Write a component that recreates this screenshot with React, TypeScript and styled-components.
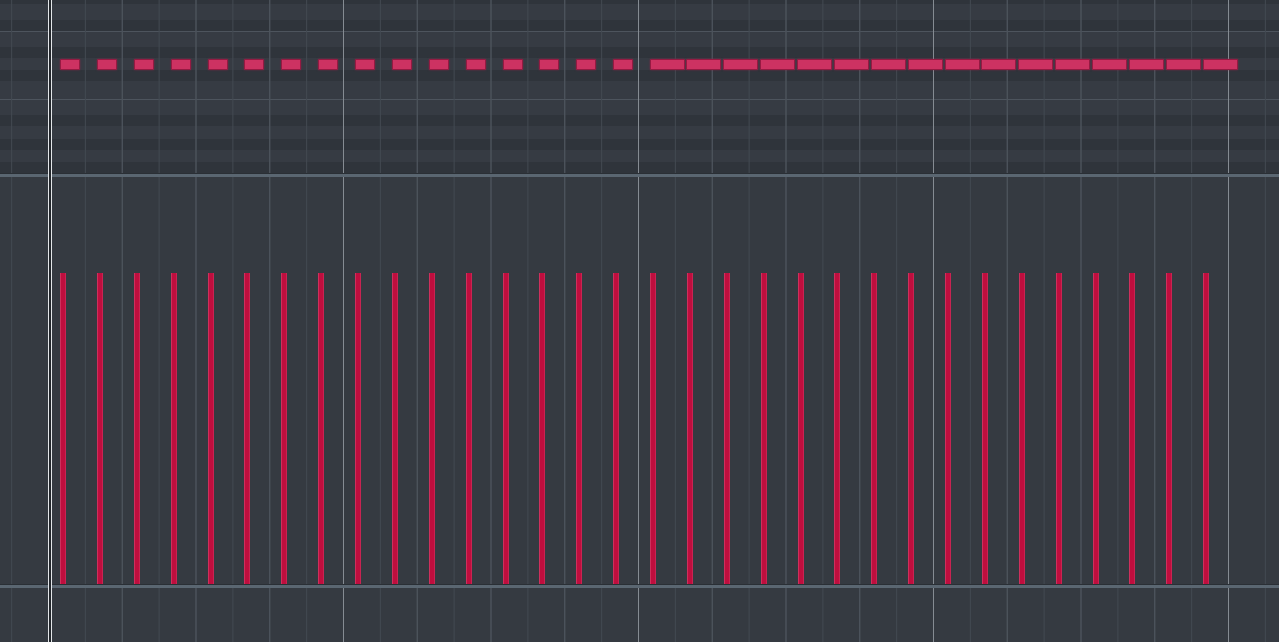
import React from "react";
import styled, { createGlobalStyle } from "styled-components";

// one beat on screen; a bar of 8 beats spans 295px
const BEAT = 295 / 8;
const ORIGIN = 48;
const FIRST_NOTE = 60;

const GlobalStyle = createGlobalStyle`
  html, body {
    margin: 0;
    padding: 0;
    background: #343940;
    overflow: hidden;
  }
  body {
    font-family: "Liberation Sans", Arial, sans-serif;
  }
`;

const gridImage = `
  linear-gradient(90deg, #858b92 0 1px, transparent 1px),
  linear-gradient(90deg, #4f565f 0 1px, transparent 1px),
  linear-gradient(90deg, #424951 0 1px, transparent 1px)
`;
const gridSize = `295px 100%, ${BEAT * 2}px 100%, ${BEAT}px 100%`;
const gridPos = `${ORIGIN}px 0, ${ORIGIN}px 0, ${ORIGIN}px 0`;

// darker rows for the black keys in the visible octave slice
const blackKeys: [number, number][] = [
  [0, 4],
  [20, 31],
  [47, 58],
  [70, 81],
  [115, 126],
  [139, 150],
  [162, 173],
];

const keyStripes = `linear-gradient(180deg, ${blackKeys
  .map(([a, b], i) => {
    const prev = i === 0 ? 0 : blackKeys[i - 1][1];
    return `transparent ${prev}px ${a}px, #2f343b ${a}px ${b}px`;
  })
  .join(", ")}, transparent 173px)`;

const octaveLines = `linear-gradient(180deg,
  transparent 0 31px, #4d545d 31px 32px,
  transparent 32px 99px, #4d545d 99px 100px,
  transparent 100px)`;

const Roll = styled.div`
  position: relative;
  width: 1279px;
  height: 642px;
  display: flex;
  flex-direction: column;
  background: #353a41;
  overflow: hidden;
`;

const NoteGrid = styled.div`
  position: relative;
  height: 173px;
  flex: none;
  background-color: #363b43;
  background-image: ${gridImage}, ${octaveLines}, ${keyStripes};
  background-size: ${gridSize}, 100% 100%, 100% 100%;
  background-position: ${gridPos}, 0 0, 0 0;
`;

const Divider = styled.div`
  flex: none;
  height: 3px;
  border-top: 1px solid #2a2f35;
  background: #5a6671;
`;

const Lane = styled.div<{ $h: number }>`
  flex: none;
  height: ${(p) => p.$h}px;
  display: flex;
  align-items: flex-end;
  gap: ${BEAT - 6}px;
  padding-left: ${FIRST_NOTE}px;
  background-color: #353a41;
  background-image: ${gridImage};
  background-size: ${gridSize};
  background-position: ${gridPos};
`;

const Note = styled.div<{ $long: boolean }>`
  position: absolute;
  top: 59px;
  height: 11px;
  width: ${(p) => (p.$long ? 35 : 20)}px;
  box-sizing: border-box;
  background: #cd3262;
  border: 1px solid #951a42;
  border-radius: 1px;
  box-shadow: 0 0 2px rgba(190, 30, 80, 0.55);
`;

const VelocityBar = styled.div`
  flex: none;
  width: 6px;
  background: #bf0e3e;
  box-shadow: inset 1px 0 rgba(225, 90, 130, 0.45),
    inset -1px 0 rgba(225, 90, 130, 0.3);
`;

const Playhead = styled.div`
  position: absolute;
  top: 0;
  bottom: 0;
  left: ${ORIGIN}px;
  width: 2px;
  border-left: 1px solid #e4e7ea;
  border-right: 1px solid #e4e7ea;
  background: #23272c;
`;

const notes = Array.from({ length: 32 }, (_, i) => ({
  start: FIRST_NOTE + i * BEAT,
  long: i >= 16,
  velocity: 0.764,
}));

const VELOCITY_LANE = 407;

export default function App() {
  return (
    <>
      <GlobalStyle />
      <Roll>
        <NoteGrid>
          {notes.map((n, i) => (
            <Note key={i} $long={n.long} style={{ left: Math.round(n.start - (n.long ? 0.5 : 0)) }} />
          ))}
        </NoteGrid>
        <Divider />
        <Lane $h={VELOCITY_LANE}>
          {notes.map((n, i) => (
            <VelocityBar key={i} style={{ height: Math.round(VELOCITY_LANE * n.velocity) }} />
          ))}
        </Lane>
        <Divider />
        <Lane $h={54} />
        <Playhead />
      </Roll>
    </>
  );
}
